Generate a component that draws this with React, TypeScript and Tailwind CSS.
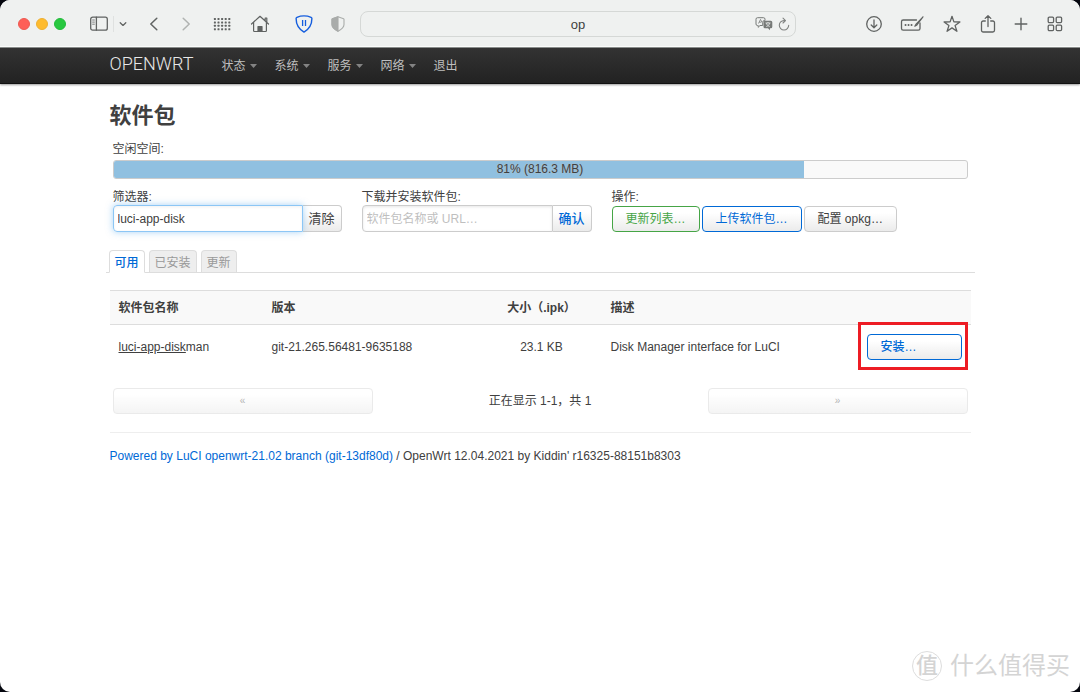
import { useState } from "react";
import type { ReactNode } from "react";

const line = {
  fill: "none",
  stroke: "currentColor",
  strokeLinecap: "round",
  strokeLinejoin: "round",
} as const;

function ToolButton({ label, className = "", children }: { label: string; className?: string; children: ReactNode }) {
  return (
    <button type="button" aria-label={label} className={`flex h-8 w-8 shrink-0 items-center justify-center text-[#606362] ${className}`}>
      {children}
    </button>
  );
}

function BrowserBar() {
  return (
    <header className="flex h-12 items-center border-b border-[#8d918f] bg-[#eff1f0] pr-[9px] pl-[18px] shadow-[inset_0_-1px_0_#fbfcfb]">
      <div className="flex shrink-0 gap-[6px]">
        <button type="button" aria-label="Close" className="h-3 w-3 rounded-full border border-[#ee5a52] bg-[#fe5f57]" />
        <button type="button" aria-label="Minimize" className="h-3 w-3 rounded-full border border-[#eeb032] bg-[#febb2e]" />
        <button type="button" aria-label="Zoom" className="h-3 w-3 rounded-full border border-[#22bc3b] bg-[#28c840]" />
      </div>
      <button type="button" aria-label="Sidebar" className="ml-6 shrink-0 text-[#606362]">
        <svg width="18" height="16" viewBox="0 0 18 16" {...line} strokeWidth="1.3">
          <rect x="0.7" y="1.2" width="16.6" height="13" rx="2" />
          <path d="M6.4 1.2v13" />
          <path d="M2.6 4h1.8M2.6 6.1h1.8M2.6 8.2h1.8" strokeWidth="0.8" />
        </svg>
      </button>
      <span className="ml-[5px] h-4 w-px bg-[#dfe1e0]" />
      <button type="button" aria-label="Tab groups" className="ml-1 w-3 shrink-0 text-[#606362]">
        <svg width="10" height="8" viewBox="0 0 10 8" {...line} strokeWidth="1.3">
          <path d="M2.2 2.8 5 5.4l2.800-2.600" />
        </svg>
      </button>
      <ToolButton label="Back" className="ml-2">
        <svg width="12" height="16" viewBox="0 0 12 16" {...line} strokeWidth="1.5">
          <path d="M8.800 2.200 2.800 8l6 5.800" />
        </svg>
      </ToolButton>
      <ToolButton label="Forward">
        <svg width="12" height="16" viewBox="0 0 12 16" {...line} stroke="#b0b3b1" strokeWidth="1.5">
          <path d="M3.200 2.200 9.200 8l-6 5.800" />
        </svg>
      </ToolButton>
      <ToolButton label="Start page" className="ml-1">
        <svg width="18" height="14" viewBox="0 0 18 14" fill="currentColor">
          {[0, 1, 2, 3].map((r) => [0, 1, 2, 3, 4].map((c) => (
            <rect key={`${r}-${c}`} x={0.9 + c * 3.6} y={1 + r * 3.4} width="2" height="2" rx="0.5" />
          )))}
        </svg>
      </ToolButton>
      <ToolButton label="Home" className="ml-[6px]">
        <svg width="20" height="18" viewBox="0 0 20 18" {...line} strokeWidth="1.200">
          <path d="M1.500 9 10 1.300 18.500 9M3.600 7.300v8.400a.8.8 0 0 0 .8.8h11.200a.8.8 0 0 0 .8-.8V7.300M15.200 5.600V3h1.600v4" />
          <path d="M8 16.500v-5h4v5z" fill="currentColor" />
        </svg>
      </ToolButton>
      <ToolButton label="Password manager" className="ml-3">
        <svg width="18" height="18" viewBox="0 0 18 18" fill="none" stroke="#155ede" strokeWidth="1.400" strokeLinejoin="round">
          <path d="M9 .9c2.400 0 4.900.5 7.100 1.400.5.200.8.600.8 1.100 0 5.700-2.300 10.300-7.900 13.700C3.400 13.700 1.100 9.100 1.100 3.400c0-.5.300-.9.800-1.100C4.100 1.400 6.600.9 9 .9Z" />
          <path d="M7.600 5.100v6M10.500 5.100v6" strokeWidth="1.300" />
        </svg>
      </ToolButton>
      <ToolButton label="Privacy report" className="ml-[2px]">
        <svg width="14" height="16" viewBox="0 0 14 16" fill="none" stroke="#a9acaa" strokeWidth="1.100" strokeLinejoin="round">
          <path d="M7 .8 12.600 2.700c.300.100.4.300.4.600v5.200c0 3-2.500 4.900-6 6.700-3.500-1.800-6-3.700-6-6.700V3.300c0-.300.100-.5.400-.600Z" />
          <path d="M7 .8v14.400C3.500 13.400 1 11.500 1 8.500V3.300c0-.300.100-.5.400-.600Z" fill="#a9acaa" />
        </svg>
      </ToolButton>
      <div className="ml-[6px] flex h-[26px] flex-1 items-center rounded-lg border border-[#d5d8d6] bg-[#eff1f0] pr-1">
        <input aria-label="Address" defaultValue="op" className="w-full min-w-0 bg-transparent pt-[2px] pl-10 text-center text-[13px] text-[#3d3f3e] outline-none" />
        <button type="button" aria-label="Translate" className="shrink-0 text-[#777a78]">
          <svg width="18" height="14" viewBox="0 0 18 14">
            <path d="M2.500.7h6a1.500 1.500 0 0 1 1.500 1.500V3.500H9.500A1.800 1.800 0 0 0 7.700 5.300V8.500H5L3.200 10.300V8.500H2.500A1.500 1.500 0 0 1 1 7V2.200A1.500 1.500 0 0 1 2.500.7Z" fill="none" stroke="currentColor" strokeWidth="1" />
            <path d="M3.500 6.500 5.500 2.400 6.800 5M4.200 5.200H6.500" fill="none" stroke="currentColor" strokeWidth=".8" />
            <path d="M10 3.800h5.800a1.500 1.500 0 0 1 1.500 1.500v4.400a1.500 1.500 0 0 1-1.500 1.500h-.8v2l-2-2h-3a1.500 1.500 0 0 1-1.500-1.500V5.300A1.500 1.500 0 0 1 10 3.800Z" fill="currentColor" />
            <path d="M10.500 6h5M13 5v1M11.300 9.500c2-.6 3-1.800 3.300-3.400M11.400 6.200c.4 1.600 1.500 2.700 3.300 3.300" fill="none" stroke="#eff1f0" strokeWidth=".8" />
          </svg>
        </button>
        <button type="button" aria-label="Reload" className="ml-1 shrink-0 text-[#808381]">
          <svg width="14" height="14" viewBox="0 0 14 14" {...line} strokeWidth="1.100">
            <path d="M8 3.600H7a4.700 4.700 0 1 0 4.700 4.700M6 1.200l2.500 2.400L6 6" />
          </svg>
        </button>
      </div>
      <ToolButton label="Downloads" className="ml-[62px]">
        <svg width="18" height="18" viewBox="0 0 18 18" {...line} strokeWidth="1.300">
          <circle cx="9" cy="9" r="7.300" />
          <path d="M9 5v7.600M6.200 10 9 12.700 11.800 10" />
        </svg>
      </ToolButton>
      <ToolButton label="Autofill" className="ml-[6px]">
        <svg width="24" height="18" viewBox="0 0 24 18" {...line} strokeWidth="1.300">
          <path d="M16.500 5H3.200A1.700 1.700 0 0 0 1.500 6.700V13.500A1.700 1.700 0 0 0 3.200 15.200H18.300A1.700 1.700 0 0 0 20 13.500V8" />
          <path d="M23 1.800 15.800 9.400 14.800 11.200 16.600 10.300Z" strokeWidth="1.100" />
          <path d="M5.500 10h.1M8.500 10h.1M11.500 10h.1" strokeWidth="1.900" />
        </svg>
      </ToolButton>
      <ToolButton label="Bookmark" className="ml-2">
        <svg width="18" height="18" viewBox="0 0 18 18" {...line} strokeWidth="1.300">
          <path d="m9 1.300 1.900 5.600 6 .1-4.800 3.600 1.800 5.700L9 12.900l-4.900 3.400 1.800-5.700L1.100 7l6-.1Z" />
        </svg>
      </ToolButton>
      <ToolButton label="Share" className="ml-1">
        <svg width="16" height="20" viewBox="0 0 16 20" {...line} strokeWidth="1.300">
          <path d="M5.300 7H3.200A1.700 1.700 0 0 0 1.500 8.700v7.600A1.700 1.700 0 0 0 3.200 18h9.600a1.700 1.700 0 0 0 1.700-1.700V8.700A1.700 1.700 0 0 0 12.800 7h-2.100M8 12.500V1.800M5.200 4.400 8 1.700l2.800 2.700" />
        </svg>
      </ToolButton>
      <ToolButton label="New tab" className="ml-px">
        <svg width="14" height="14" viewBox="0 0 14 14" {...line} strokeWidth="1.400">
          <path d="M7 1.200v11.600M1.200 7h11.600" />
        </svg>
      </ToolButton>
      <ToolButton label="Tab overview" className="ml-[2px]">
        <svg width="16" height="16" viewBox="0 0 16 16" {...line} strokeWidth="1.300">
          <rect x="1.200" y="1.200" width="5.400" height="5.400" rx="1.100" />
          <rect x="9.200" y="1.200" width="5.400" height="5.400" rx="1.100" />
          <rect x="1.200" y="9.200" width="5.400" height="5.400" rx="1.100" />
          <rect x="9.200" y="9.200" width="5.400" height="5.400" rx="1.100" />
        </svg>
      </ToolButton>
    </header>
  );
}

const menus = ["状态", "系统", "服务", "网络"];

function NavBar() {
  return (
    <nav className="h-9 border-b border-[#111] bg-linear-to-b from-[#333] to-[#222] shadow-[0_1px_2px_rgba(0,0,0,0.4)]">
      <div className="mx-auto flex h-full max-w-[861px] items-center">
        <a href="#home" className="w-[103px] pb-[3px] font-['Roboto'] text-[18px] font-light text-[#e8e8e8]">OPENWRT</a>
        <ul className="flex items-center pt-px text-[12px] text-[#bfbfbf]">
          {menus.map((m) => (
            <li key={m}>
              <a href={`#${m}`} className="flex w-[53px] items-center gap-1 pl-[9px]">
                {m}
                <svg width="7" height="4" viewBox="0 0 7 4" className="opacity-60"><path d="M0 0h7L3.500 4Z" fill="currentColor" /></svg>
              </a>
            </li>
          ))}
          <li><a href="#logout" className="block pl-[9px]">退出</a></li>
        </ul>
      </div>
    </nav>
  );
}

const btn =
  "h-[26px] rounded border bg-linear-to-b from-white from-25% to-[#ebebeb] px-[13px] text-[12px] whitespace-nowrap";
const addon =
  "h-[27px] w-[39px] shrink-0 rounded-r border border-l-0 border-[#ccc] bg-linear-to-b from-white from-25% to-[#ebebeb] text-[13px] whitespace-nowrap";
const pager =
  "h-[26px] flex-1 rounded border border-[#ccc] bg-linear-to-b from-white from-25% to-[#e6e6e6] text-[10px] opacity-40";
const tabs = ["可用", "已安装", "更新"];

export default function App() {
  const [filter, setFilter] = useState("luci-app-disk");
  const [tab, setTab] = useState("可用");
  const used = 81;

  return (
    <div className="min-h-screen bg-[#05070f] font-['Liberation_Sans','Noto_Sans_CJK_SC',sans-serif] text-[12px] leading-4 text-[#404040]">
      <div className="relative min-h-screen overflow-hidden rounded-[10px] bg-white">
        <BrowserBar />
        <NavBar />
        <main className="mx-auto max-w-[861px] pt-4">
          <h2 className="text-[22px] leading-8 font-bold">软件包</h2>

          <section className="mt-[9px] px-[3px]">
            <div id="space">空闲空间:</div>
            <div
              role="progressbar"
              aria-labelledby="space"
              aria-valuenow={used}
              className="relative mt-[3px] h-[19px] overflow-hidden rounded-[3px] border border-[#ccc] bg-[#f9f9f9]"
            >
              <div className="h-full bg-[#90c0e0]" style={{ width: `${used}%` }} />
              <span className="absolute inset-0 text-center leading-[17px] [text-shadow:0_0_2px_#bbb]">81% (816.3 MB)</span>
            </div>

            <div className="mt-[10px] flex flex-wrap gap-x-5">
              <div className="w-[229px]">
                <label htmlFor="filter" className="block">筛选器:</label>
                <div className="flex">
                  <input
                    id="filter"
                    value={filter}
                    onChange={(e) => setFilter(e.target.value)}
                    className="relative h-[27px] min-w-0 flex-1 rounded-l border border-[#8cc6f5] px-1 text-[12px] shadow-[inset_0_1px_3px_rgba(0,0,0,0.06),0_0_7px_rgba(82,168,236,0.5)] outline-none"
                  />
                  <button type="button" onClick={() => setFilter("")} className={addon}>清除</button>
                </div>
              </div>
              <div className="w-[230px]">
                <label htmlFor="install" className="block">下载并安装软件包:</label>
                <div className="flex">
                  <input
                    id="install"
                    placeholder="软件包名称或 URL…"
                    className="h-[27px] min-w-0 flex-1 rounded-l border border-[#ccc] px-1 text-[12px] shadow-[inset_0_1px_3px_rgba(0,0,0,0.1)] outline-none placeholder:text-[#bfbfbf]"
                  />
                  <button type="button" className={`${addon} font-medium text-[#0069d6]`}>确认</button>
                </div>
              </div>
              <div className="flex-1">
                <div>操作:</div>
                <div className="mt-px flex gap-[2px]">
                  <button type="button" className={`${btn} border-[#46a546] text-[#46a546]`}>更新列表…</button>
                  <button type="button" className={`${btn} border-[#0069d6] text-[#0069d6]`}>上传软件包…</button>
                  <button type="button" className={`${btn} border-[#ccc]`}>配置 opkg…</button>
                </div>
              </div>
            </div>
          </section>

          <div role="tablist" className="-mx-1 mt-[18px] flex items-end gap-1 border-b border-[#ddd] pl-[3px]">
            {tabs.map((t) => (
              <button
                key={t}
                type="button"
                role="tab"
                aria-selected={t === tab}
                onClick={() => setTab(t)}
                className={
                  t === tab
                    ? "-mb-px h-[23px] rounded-t border border-[#ddd] border-b-white bg-white px-[5px] pt-[2px] font-medium text-[#0069d6]"
                    : "h-[22px] rounded-t border border-b-0 border-[#ddd] bg-[#eee] px-[5px] pt-[2px] text-[#999]"
                }
              >
                {t}
              </button>
            ))}
          </div>

          <table className="mt-[17px] w-full table-fixed border-collapse text-left">
            <colgroup>
              <col className="w-[153px]" />
              <col className="w-[219px]" />
              <col className="w-[120px]" />
              <col />
              <col className="w-[113px]" />
            </colgroup>
            <thead>
              <tr className="h-[34px] border-y border-[#ddd] bg-[#f9f9f9]">
                <th className="px-[9px]">软件包名称</th>
                <th className="px-[9px]">版本</th>
                <th className="text-center">大小（.ipk）</th>
                <th className="px-[9px]">描述</th>
                <th aria-label="操作" />
              </tr>
            </thead>
            <tbody>
              <tr className="h-[45px]">
                <td className="px-[9px]"><span className="underline">luci-app-disk</span>man</td>
                <td className="px-[9px]">git-21.265.56481-9635188</td>
                <td className="text-center">23.1 KB</td>
                <td className="px-[9px]">Disk Manager interface for LuCI</td>
                <td className="px-[9px]">
                  <div className="relative">
                    <button type="button" className={`${btn} block w-full border-[#0069d6] text-left font-medium text-[#0069d6]`}>安装…</button>
                    <span className="pointer-events-none absolute -top-3 -right-[6px] -bottom-[10px] -left-[9px] border-3 border-[#ed1c24]" />
                  </div>
                </td>
              </tr>
            </tbody>
          </table>

          <div className="mt-[18px] flex items-center px-[3px] pb-[18px]">
            <button type="button" disabled aria-label="上一页" className={pager}>«</button>
            <div className="w-[335px] text-center">正在显示 1-1，共 1</div>
            <button type="button" disabled aria-label="下一页" className={pager}>»</button>
          </div>

          <footer className="border-t border-[#eee] pt-[15px]">
            <a href="#luci" className="text-[#0069d6]">Powered by LuCI openwrt-21.02 branch (git-13df80d)</a> / OpenWrt 12.04.2021 by Kiddin' r16325-88151b8303
          </footer>
        </main>

        <div className="absolute right-[10px] bottom-[10px] flex items-center gap-2 text-[#d4d4d4]">
          <span className="flex h-[30px] w-[30px] items-center justify-center rounded-full border border-[#ddd] text-[22px] font-medium">值</span>
          <span className="text-[24px] leading-8">什么值得买</span>
        </div>
      </div>
    </div>
  );
}
